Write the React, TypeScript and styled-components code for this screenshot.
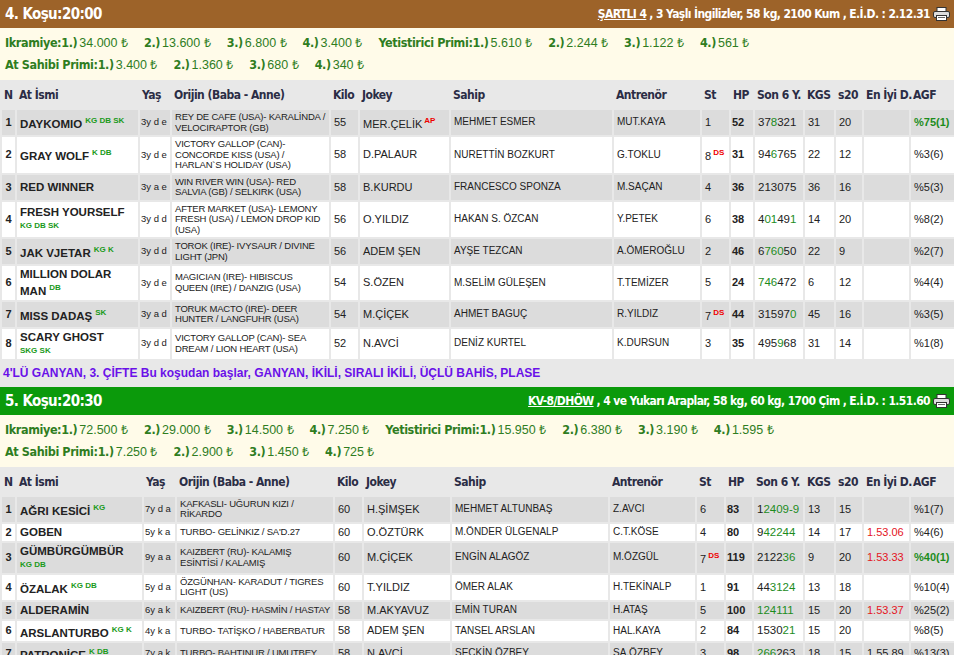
import React from 'react';
import styled, { createGlobalStyle } from 'styled-components';

const GlobalStyle = createGlobalStyle`
  body {
    margin: 0;
    background: #e8e8e8;
    font-family: "Liberation Sans", Arial, sans-serif;
  }
`;

const cond = `"DejaVu Sans Condensed", "Liberation Sans", sans-serif`;

const Page = styled.div`
  width: 954px;
  background: #e8e8e8;
`;

const TitleBar = styled.div<{ $bg: string }>`
  display: flex;
  align-items: center;
  justify-content: space-between;
  height: 28px;
  padding: 0 4px 0 5px;
  background: ${p => p.$bg};
  color: #fff;
  font-family: ${cond};
  font-weight: bold;
  letter-spacing: -0.6px;
`;

const RaceName = styled.span`
  font-size: 15px;
`;

const Info = styled.span`
  display: flex;
  align-items: center;
  gap: 3px;
  font-size: 12px;
  u { text-decoration: underline; }
`;

const Prizes = styled.div`
  background: #fffbe9;
  padding: 4px 5px 4px;
  font-family: ${cond};
  color: #2f7d1f;
  font-size: 12.5px;
  letter-spacing: -0.4px;
  font-weight: bold;
  line-height: 21px;
`;

const PrizeLine = styled.div`
  display: flex;
  gap: 16px;
`;

const Amount = styled.span`
  font-family: "Liberation Sans", Arial, sans-serif;
  font-weight: normal;
  font-size: 12.5px;
  letter-spacing: 0;
  margin-left: 2px;
`;

const Table = styled.table`
  width: 954px;
  border-collapse: separate;
  border-spacing: 2px;
  table-layout: fixed;
`;

const Th = styled.th`
  text-align: left;
  font-family: ${cond};
  font-weight: bold;
  font-size: 12px;
  letter-spacing: -0.5px;
  color: #2b2d45;
  height: 26px;
  padding: 0 2px;
  white-space: nowrap;
`;

const Tr = styled.tr<{ $odd: boolean }>`
  background: ${p => (p.$odd ? '#dcdcdc' : '#fff')};
`;

const Td = styled.td<{ $small?: boolean; $bold?: boolean; $center?: boolean }>`
  font-size: ${p => (p.$small ? '9.5px' : '11px')};
  font-weight: ${p => (p.$bold ? 'bold' : 'normal')};
  text-align: ${p => (p.$center ? 'center' : 'left')};
  color: #222;
  padding: 2px 3px;
  line-height: ${p => (p.$small ? '10.5px' : '13px')};
  vertical-align: middle;
`;

const Origin = styled(Td)`
  letter-spacing: -0.2px;
  padding: 2px 2px 2px 3px;
`;

const NoWrap = styled(Td)`
  white-space: nowrap;
`;

const Name = styled.span`
  font-weight: bold;
  font-size: 11.5px;
`;

const Tag = styled.sup`
  color: #1a9a1a;
  font-size: 8px;
  font-weight: bold;
  margin-left: 3px;
`;

const TagLine = styled.div`
  color: #1a9a1a;
  font-size: 8px;
  font-weight: bold;
`;

const Red = styled.sup`
  color: #e00;
  font-size: 8px;
  font-weight: bold;
  margin-left: 2px;
`;

const Green = styled.span`
  color: #1c8c1c;
`;

const BestTime = styled.span<{ $red: boolean }>`
  color: ${p => (p.$red ? '#e4141e' : '#222')};
`;

const BetLine = styled.div`
  color: #6a11e8;
  font-weight: bold;
  font-size: 12px;
  padding: 5px 3px 7px;
`;

const Printer = () => (
  <svg width="17" height="14" viewBox="0 0 17 14">
    <rect x="4" y="0.5" width="9" height="5" fill="#fff" stroke="#333" />
    <rect x="0.5" y="4.5" width="16" height="6" rx="1.5" fill="#ddd" stroke="#333" />
    <rect x="3.5" y="8.5" width="10" height="5" fill="#fff" stroke="#333" />
    <line x1="5" y1="10.5" x2="12" y2="10.5" stroke="#666" />
  </svg>
);

type Row = {
  no: number; name: string; tags: string; tagBelow?: boolean; age: string; origin: string;
  kilo: string; jockey: string; ap?: boolean; owner: string; trainer: string; st: string; ds?: boolean;
  hp: string; son: string; kgs: string; s20: string; best?: string; bestRed?: boolean; agf: string; agfGreen?: boolean;
};

// son: green digits wrapped in []
const Son = ({ s }: { s: string }) => {
  const parts = s.split(/(\[[^\]]*\])/).filter(Boolean);
  return <>{parts.map((p, i) => (p.startsWith('[') ? <Green key={i}>{p.slice(1, -1)}</Green> : <span key={i}>{p}</span>))}</>;
};

const race4: Row[] = [
  { no: 1, name: 'DAYKOMIO', tags: 'KG DB SK', age: '3y d e', origin: 'REY DE CAFE (USA)- KARALİNDA / VELOCIRAPTOR (GB)', kilo: '55', jockey: 'MER.ÇELİK', ap: true, owner: 'MEHMET ESMER', trainer: 'MUT.KAYA', st: '1', hp: '52', son: '37[8]321', kgs: '31', s20: '20', agf: '%75(1)', agfGreen: true },
  { no: 2, name: 'GRAY WOLF', tags: 'K DB', age: '3y d e', origin: 'VICTORY GALLOP (CAN)- CONCORDE KISS (USA) / HARLAN`S HOLIDAY (USA)', kilo: '58', jockey: 'D.PALAUR', owner: 'NURETTİN BOZKURT', trainer: 'G.TOKLU', st: '8', ds: true, hp: '31', son: '94[6]765', kgs: '22', s20: '12', agf: '%3(6)' },
  { no: 3, name: 'RED WINNER', tags: '', age: '3y a e', origin: 'WIN RIVER WIN (USA)- RED SALVIA (GB) / SELKIRK (USA)', kilo: '58', jockey: 'B.KURDU', owner: 'FRANCESCO SPONZA', trainer: 'M.SAÇAN', st: '4', hp: '36', son: '213075', kgs: '36', s20: '16', agf: '%5(3)' },
  { no: 4, name: 'FRESH YOURSELF', tags: 'KG DB SK', tagBelow: true, age: '3y d d', origin: 'AFTER MARKET (USA)- LEMONY FRESH (USA) / LEMON DROP KID (USA)', kilo: '56', jockey: 'O.YILDIZ', owner: 'HAKAN S. ÖZCAN', trainer: 'Y.PETEK', st: '6', hp: '38', son: '4[01]49[1]', kgs: '14', s20: '20', agf: '%8(2)' },
  { no: 5, name: 'JAK VJETAR', tags: 'KG K', age: '3y d d', origin: 'TOROK (IRE)- IVYSAUR / DIVINE LIGHT (JPN)', kilo: '56', jockey: 'ADEM ŞEN', owner: 'AYŞE TEZCAN', trainer: 'A.ÖMEROĞLU', st: '2', hp: '46', son: '6[760]50', kgs: '22', s20: '9', agf: '%2(7)' },
  { no: 6, name: 'MILLION DOLAR MAN', tags: 'DB', age: '3y d e', origin: 'MAGICIAN (IRE)- HIBISCUS QUEEN (IRE) / DANZIG (USA)', kilo: '54', jockey: 'S.ÖZEN', owner: 'M.SELİM GÜLEŞEN', trainer: 'T.TEMİZER', st: '5', hp: '24', son: '[746]472', kgs: '6', s20: '12', agf: '%4(4)' },
  { no: 7, name: 'MISS DADAŞ', tags: 'SK', age: '3y a d', origin: 'TORUK MACTO (IRE)- DEER HUNTER / LANGFUHR (USA)', kilo: '54', jockey: 'M.ÇİÇEK', owner: 'AHMET BAGUÇ', trainer: 'R.YILDIZ', st: '7', ds: true, hp: '44', son: '31597[0]', kgs: '45', s20: '16', agf: '%3(5)' },
  { no: 8, name: 'SCARY GHOST', tags: 'SKG SK', tagBelow: true, age: '3y d d', origin: 'VICTORY GALLOP (CAN)- SEA DREAM / LION HEART (USA)', kilo: '52', jockey: 'N.AVCİ', owner: 'DENİZ KURTEL', trainer: 'K.DURSUN', st: '3', hp: '35', son: '495[9]68', kgs: '31', s20: '14', agf: '%1(8)' },
];

const race5: Row[] = [
  { no: 1, name: 'AĞRI KESİCİ', tags: 'KG', age: '7y d a', origin: 'KAFKASLI- UĞURUN KIZI / RİKARDO', kilo: '60', jockey: 'H.ŞİMŞEK', owner: 'MEHMET ALTUNBAŞ', trainer: 'Z.AVCI', st: '6', hp: '83', son: '1[2409-9]', kgs: '13', s20: '15', agf: '%1(7)' },
  { no: 2, name: 'GOBEN', tags: '', age: '5y k a', origin: 'TURBO- GELİNKIZ / SA\'D.27', kilo: '60', jockey: 'O.ÖZTÜRK', owner: 'M.ÖNDER ÜLGENALP', trainer: 'C.T.KÖSE', st: '4', hp: '80', son: '9[42244]', kgs: '14', s20: '17', best: '1.53.06', bestRed: true, agf: '%4(6)' },
  { no: 3, name: 'GÜMBÜRGÜMBÜR', tags: 'KG DB', tagBelow: true, age: '9y a a', origin: 'KAIZBERT (RU)- KALAMIŞ ESİNTİSİ / KALAMIŞ', kilo: '60', jockey: 'M.ÇİÇEK', owner: 'ENGİN ALAGÖZ', trainer: 'M.ÖZGÜL', st: '7', ds: true, hp: '119', son: '2122[36]', kgs: '9', s20: '20', best: '1.53.33', bestRed: true, agf: '%40(1)', agfGreen: true },
  { no: 4, name: 'ÖZALAK', tags: 'KG DB', age: '5y d a', origin: 'ÖZGÜNHAN- KARADUT / TIGRES LIGHT (US)', kilo: '60', jockey: 'T.YILDIZ', owner: 'ÖMER ALAK', trainer: 'H.TEKİNALP', st: '1', hp: '91', son: '44[3124]', kgs: '13', s20: '18', agf: '%10(4)' },
  { no: 5, name: 'ALDERAMİN', tags: '', age: '6y a k', origin: 'KAIZBERT (RU)- HASMİN / HASTAY', kilo: '58', jockey: 'M.AKYAVUZ', owner: 'EMİN TURAN', trainer: 'H.ATAŞ', st: '5', hp: '100', son: '[124111]', kgs: '15', s20: '20', best: '1.53.37', bestRed: true, agf: '%25(2)' },
  { no: 6, name: 'ARSLANTURBO', tags: 'KG K', age: '4y k a', origin: 'TURBO- TATİŞKO / HABERBATUR', kilo: '58', jockey: 'ADEM ŞEN', owner: 'TANSEL ARSLAN', trainer: 'HAL.KAYA', st: '2', hp: '84', son: '1530[21]', kgs: '15', s20: '20', agf: '%8(5)' },
  { no: 7, name: 'PATRONİÇE', tags: 'K DB', age: '7y a k', origin: 'TURBO- BAHTINUR / UMUTBEY', kilo: '58', jockey: 'N.AVCİ', owner: 'SEÇKİN ÖZBEY', trainer: 'SA.ÖZBEY', st: '3', hp: '98', son: '[266]263', kgs: '18', s20: '15', best: '1.55.89', agf: '%13(3)' },
];

const heads = ['N', 'At İsmi', 'Yaş', 'Orijin (Baba - Anne)', 'Kilo', 'Jokey', 'Sahip', 'Antrenör', 'St', 'HP', 'Son 6 Y.', 'KGS', 's20', 'En İyi D.', 'AGF'];
const widths4 = [13, 121, 30, 157, 27, 89, 161, 86, 27, 22, 48, 29, 26, 45, 43];
const widths5 = [13, 125, 31, 156, 27, 86, 156, 85, 27, 26, 49, 29, 26, 45, 43];

const RaceTable = ({ rows, widths }: { rows: Row[]; widths: number[] }) => (
  <Table>
    <colgroup>
      {widths.map((w, i) => <col key={i} style={{ width: w }} />)}
    </colgroup>
    <thead>
      <tr>{heads.map(h => <Th key={h}>{h}</Th>)}</tr>
    </thead>
    <tbody>
      {rows.map((r, i) => (
        <Tr key={r.no} $odd={i % 2 === 0}>
          <Td $bold $center style={{ padding: '2px 1px' }}>{r.no}</Td>
          <Td>
            <Name>{r.name}</Name>
            {r.tags && !r.tagBelow && <Tag>{r.tags}</Tag>}
            {r.tags && r.tagBelow && <TagLine>{r.tags}</TagLine>}
          </Td>
          <Td $small style={{ padding: '2px 1px' }}>{r.age}</Td>
          <Origin $small>{r.origin}</Origin>
          <Td>{r.kilo}</Td>
          <Td>{r.jockey}{r.ap && <Red>AP</Red>}</Td>
          <Td $small style={{ fontSize: 10 }}>{r.owner}</Td>
          <Td $small style={{ fontSize: 10 }}>{r.trainer}</Td>
          <NoWrap>{r.st}{r.ds && <Red>DS</Red>}</NoWrap>
          <Td $bold style={{ padding: '2px 1px' }}>{r.hp}</Td>
          <NoWrap style={{ fontSize: 11.5, padding: '2px 1px 2px 3px' }}><Son s={r.son} /></NoWrap>
          <Td>{r.kgs}</Td>
          <Td>{r.s20}</Td>
          <NoWrap>{r.best && <BestTime $red={!!r.bestRed}>{r.best}</BestTime>}</NoWrap>
          <NoWrap style={r.agfGreen ? { color: '#1c8c1c', fontWeight: 'bold' } : undefined}>{r.agf}</NoWrap>
        </Tr>
      ))}
    </tbody>
  </Table>
);

const Prize = ({ label, items }: { label: string; items: string[] }) => (
  <>
    {items.map((a, i) => (
      <span key={i}>{i === 0 ? `${label}:1.)` : `${i + 1}.)`}<Amount>{a} ₺</Amount></span>
    ))}
  </>
);

export default function App() {
  return (
    <Page>
      <GlobalStyle />
      <TitleBar $bg="#9d6329">
        <RaceName>4. Koşu:20:00</RaceName>
        <Info><u>ŞARTLI 4</u> , 3 Yaşlı İngilizler, 58 kg, 2100 Kum , E.İ.D. : 2.12.31 <Printer /></Info>
      </TitleBar>
      <Prizes>
        <PrizeLine>
          <Prize label="Ikramiye" items={['34.000', '13.600', '6.800', '3.400']} />
          <Prize label="Yetistirici Primi" items={['5.610', '2.244', '1.122', '561']} />
        </PrizeLine>
        <PrizeLine>
          <Prize label="At Sahibi Primi" items={['3.400', '1.360', '680', '340']} />
        </PrizeLine>
      </Prizes>
      <RaceTable rows={race4} widths={widths4} />
      <BetLine>4'LÜ GANYAN, 3. ÇİFTE Bu koşudan başlar, GANYAN, İKİLİ, SIRALI İKİLİ, ÜÇLÜ BAHİS, PLASE</BetLine>
      <TitleBar $bg="#0b9a0b">
        <RaceName>5. Koşu:20:30</RaceName>
        <Info><u>KV-8/DHÖW</u> , 4 ve Yukarı Araplar, 58 kg, 60 kg, 1700 Çim , E.İ.D. : 1.51.60 <Printer /></Info>
      </TitleBar>
      <Prizes>
        <PrizeLine>
          <Prize label="Ikramiye" items={['72.500', '29.000', '14.500', '7.250']} />
          <Prize label="Yetistirici Primi" items={['15.950', '6.380', '3.190', '1.595']} />
        </PrizeLine>
        <PrizeLine>
          <Prize label="At Sahibi Primi" items={['7.250', '2.900', '1.450', '725']} />
        </PrizeLine>
      </Prizes>
      <RaceTable rows={race5} widths={widths5} />
    </Page>
  );
}
